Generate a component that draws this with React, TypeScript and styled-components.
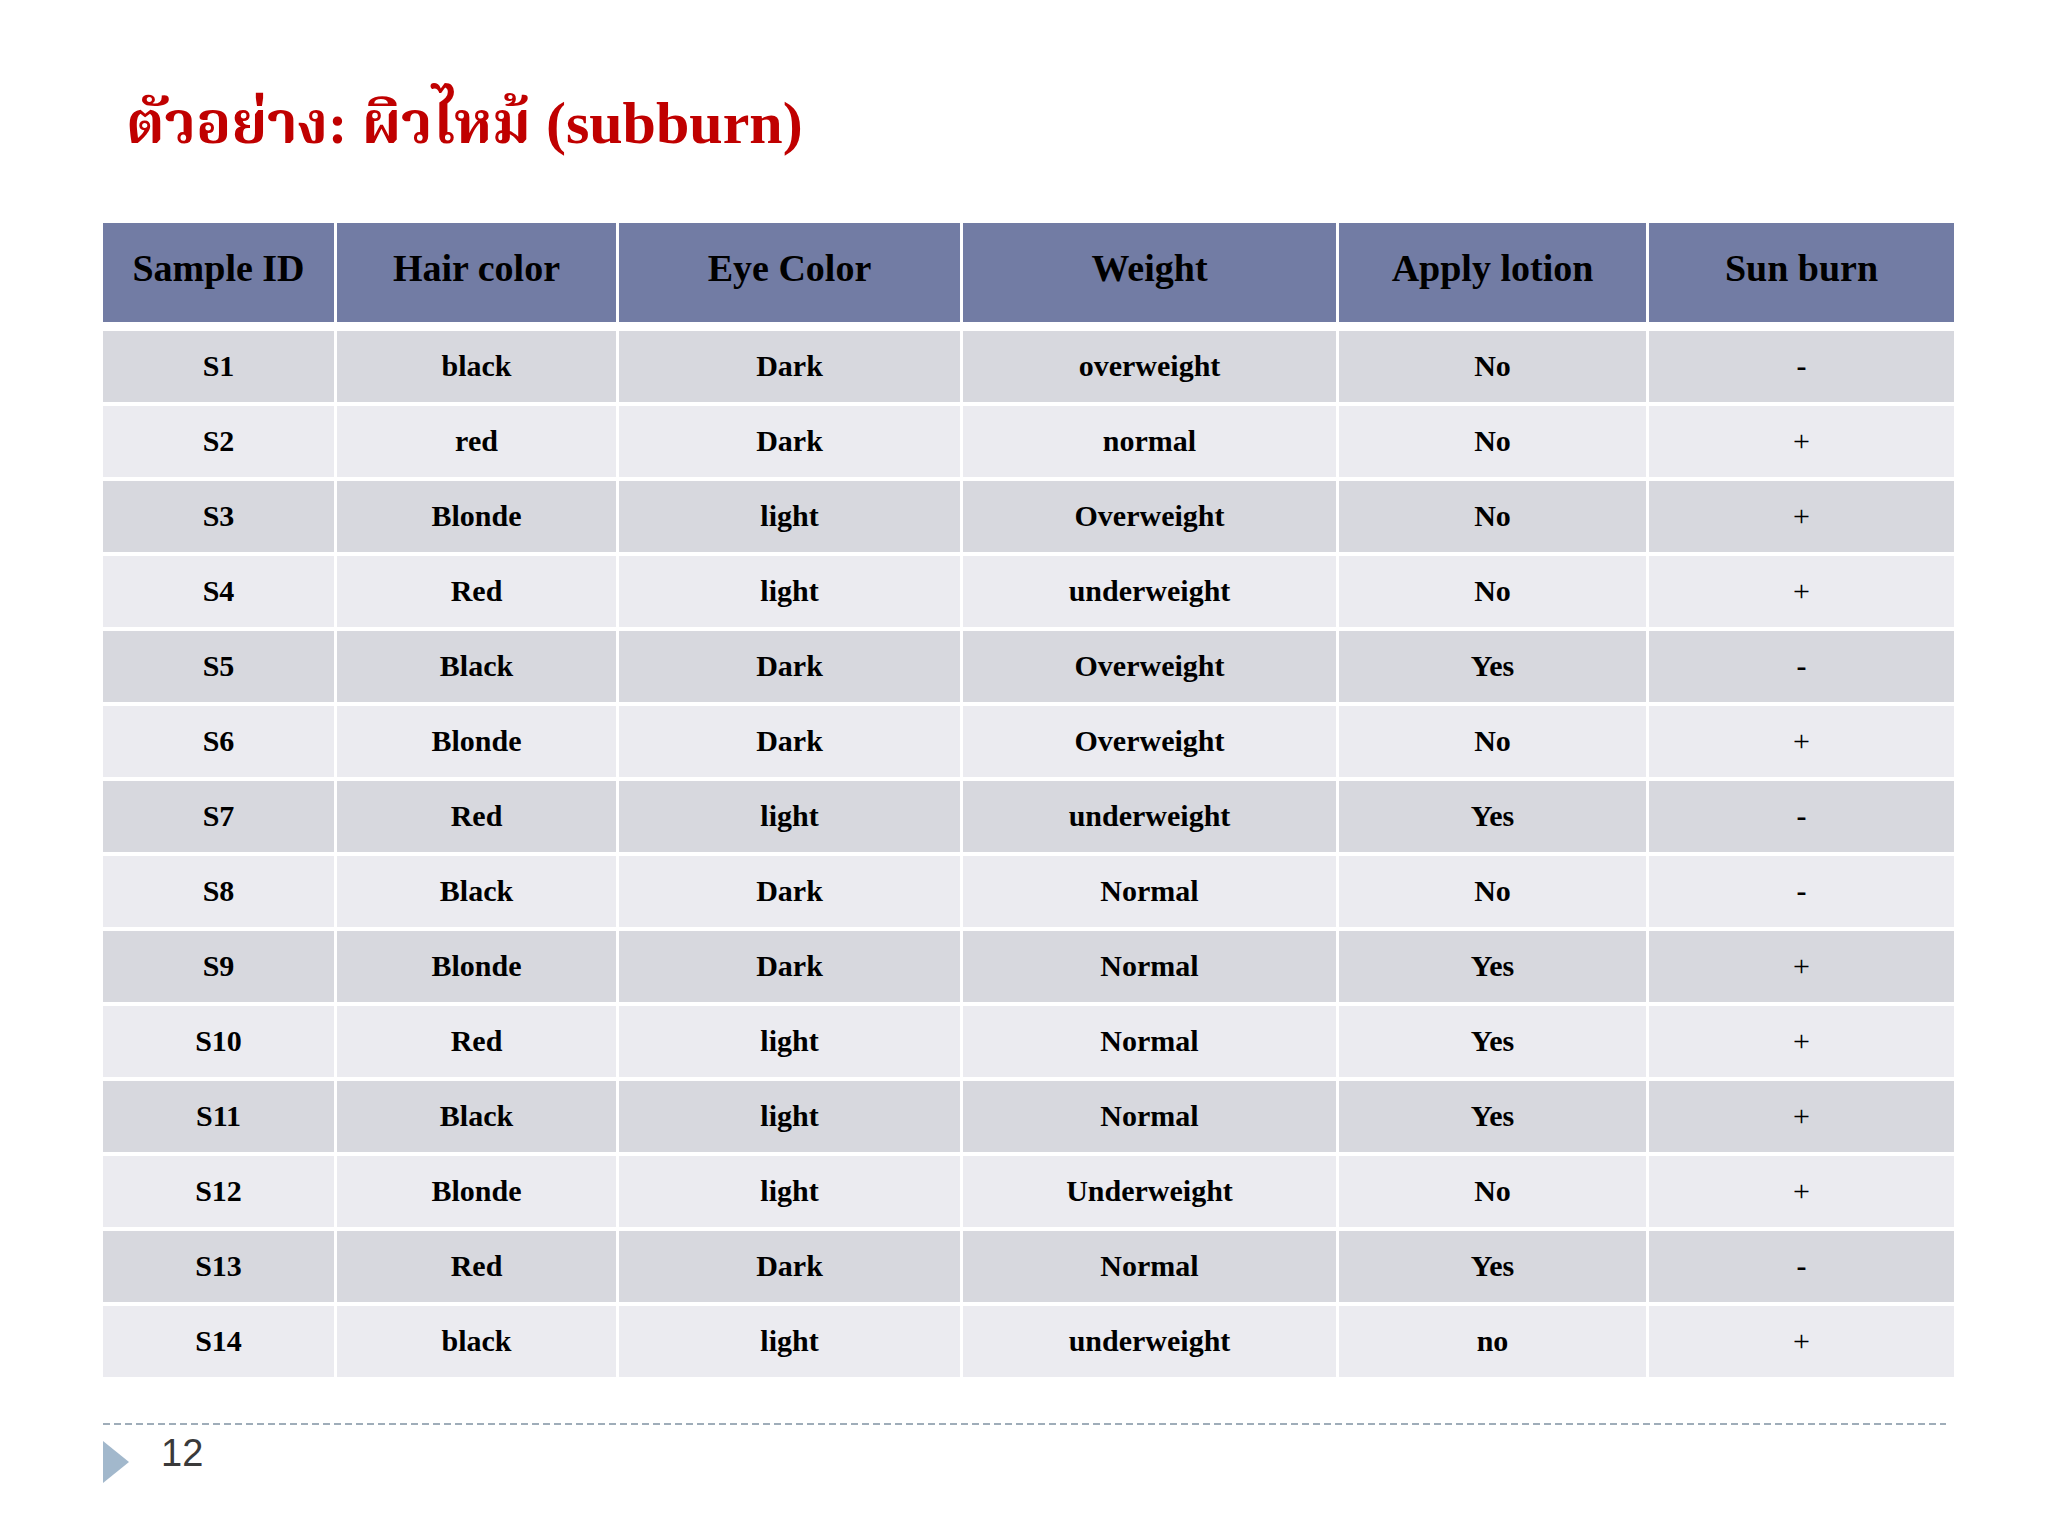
import styled, { createGlobalStyle } from "styled-components";

const GlobalStyle = createGlobalStyle`
  * {
    box-sizing: border-box;
  }
  body {
    margin: 0;
    background: #ffffff;
  }
`;

const columns = [
  "Sample ID",
  "Hair color",
  "Eye Color",
  "Weight",
  "Apply lotion",
  "Sun burn",
];

const rows = [
  ["S1", "black", "Dark", "overweight", "No", "-"],
  ["S2", "red", "Dark", "normal", "No", "+"],
  ["S3", "Blonde", "light", "Overweight", "No", "+"],
  ["S4", "Red", "light", "underweight", "No", "+"],
  ["S5", "Black", "Dark", "Overweight", "Yes", "-"],
  ["S6", "Blonde", "Dark", "Overweight", "No", "+"],
  ["S7", "Red", "light", "underweight", "Yes", "-"],
  ["S8", "Black", "Dark", "Normal", "No", "-"],
  ["S9", "Blonde", "Dark", "Normal", "Yes", "+"],
  ["S10", "Red", "light", "Normal", "Yes", "+"],
  ["S11", "Black", "light", "Normal", "Yes", "+"],
  ["S12", "Blonde", "light", "Underweight", "No", "+"],
  ["S13", "Red", "Dark", "Normal", "Yes", "-"],
  ["S14", "black", "light", "underweight", "no", "+"],
];

const App = () => {
  return (
    <Slide>
      <GlobalStyle />
      <Title>
        <Thai>ตัวอย่าง: ผิวไหม้</Thai> (subburn)
      </Title>
      <Table>
        <HeaderRow>
          {columns.map((c) => (
            <HeaderCell key={c}>{c}</HeaderCell>
          ))}
        </HeaderRow>
        <Body>
          {rows.map((r, i) => (
            <Row key={r[0]} $odd={i % 2 === 0}>
              {r.map((v, j) => (
                <Cell key={j} $thin={v === "+"}>
                  {v}
                </Cell>
              ))}
            </Row>
          ))}
        </Body>
      </Table>
      <Footer>
        <DashedLine />
        <FooterRow>
          <Triangle />
          <PageNumber>12</PageNumber>
        </FooterRow>
      </Footer>
    </Slide>
  );
};

const Slide = styled.div`
  width: 2048px;
  height: 1536px;
  display: flex;
  flex-direction: column;
  padding: 0 94px 0 103px;
  background: #ffffff;
`;

const Title = styled.h1`
  margin: 91px 0 0 23px;
  height: 64px;
  line-height: 64px;
  font-family: "Liberation Serif", "Noto Serif Thai", "Noto Sans Thai", serif;
  font-size: 60px;
  font-weight: bold;
  color: #c00000;
  white-space: nowrap;
`;

const Thai = styled.span`
  font-size: 58px;
`;

const Table = styled.div`
  margin-top: 68px;
  display: flex;
  flex-direction: column;
  gap: 9px;
  font-family: "Liberation Serif", "Times New Roman", serif;
  color: #000000;
`;

const grid = `
  display: grid;
  grid-template-columns: 231px 279px 341px 373px 307px 305px;
  column-gap: 3px;
`;

const HeaderRow = styled.div`
  ${grid}
  height: 99px;
`;

const HeaderCell = styled.div`
  display: flex;
  align-items: center;
  justify-content: center;
  padding-bottom: 10px;
  background: #727ca4;
  font-size: 38px;
  font-weight: bold;
  white-space: nowrap;
`;

const Body = styled.div`
  display: flex;
  flex-direction: column;
  gap: 4px;
`;

const Row = styled.div<{ $odd: boolean }>`
  ${grid}
  height: 71px;
  background: #ffffff;

  & > div {
    background: ${(p) => (p.$odd ? "#d7d8de" : "#ebebf0")};
  }
`;

const Cell = styled.div<{ $thin: boolean }>`
  display: flex;
  align-items: center;
  justify-content: center;
  padding-bottom: 2px;
  font-size: 30px;
  font-weight: ${(p) => (p.$thin ? "normal" : "bold")};
  white-space: nowrap;
`;

const Footer = styled.div`
  margin-top: 46px;
  display: flex;
  flex-direction: column;
`;

const DashedLine = styled.div`
  width: 1843px;
  height: 2px;
  background: repeating-linear-gradient(
    to right,
    #9fadb9 0 7px,
    transparent 7px 11px
  );
`;

const FooterRow = styled.div`
  margin-top: 9px;
  display: flex;
  align-items: flex-start;
`;

const Triangle = styled.div`
  margin-top: 7px;
  width: 0;
  height: 0;
  border-top: 21px solid transparent;
  border-bottom: 21px solid transparent;
  border-left: 26px solid #a2b8cc;
`;

const PageNumber = styled.div`
  margin-left: 32px;
  font-family: "Liberation Sans", Arial, sans-serif;
  font-size: 38px;
  line-height: 38px;
  color: #3a3a3a;
`;

export default App;
